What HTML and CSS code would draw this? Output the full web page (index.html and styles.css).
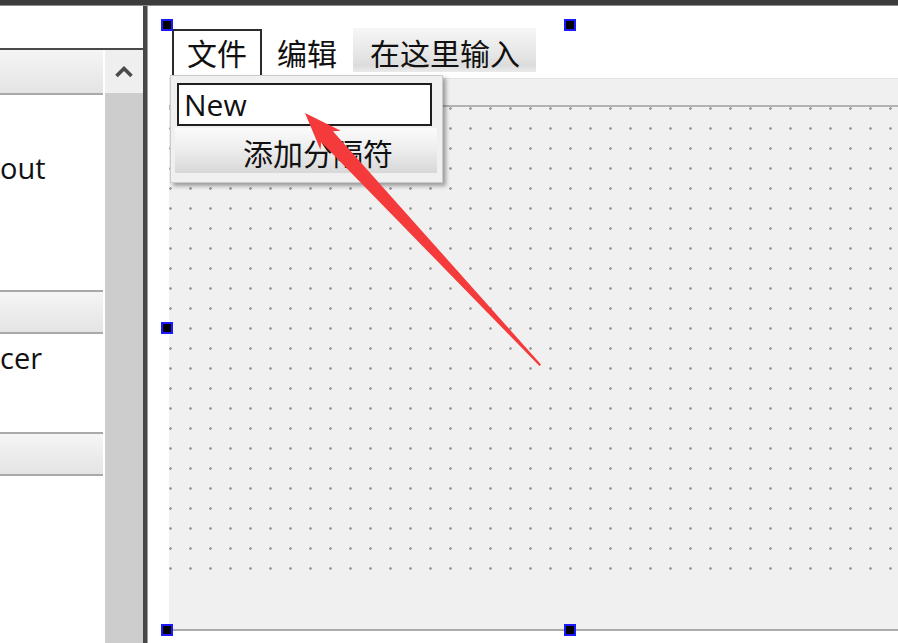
FILE: index.html
```html
<!DOCTYPE html>
<html lang="zh-CN">
<head>
<meta charset="utf-8">
<title>Designer</title>
<link rel="stylesheet" href="styles.css">
</head>
<body>
<div class="topbar"></div>
<div class="main">
  <aside class="left">
    <div class="left-top"></div>
    <div class="left-list">
      <div class="list-col">
        <div class="cat"></div>
        <div class="item-area a1"><span class="item">out</span></div>
        <div class="cat mid"></div>
        <div class="item-area a2"><span class="item">cer</span></div>
        <div class="cat mid"></div>
        <div class="item-area a3"></div>
      </div>
      <div class="scroll">
        <div class="scroll-btn">
          <svg width="20" height="13" viewBox="0 0 20 13"><polyline points="2.5,11 10,3.5 17.5,11" fill="none" stroke="#4a4a4a" stroke-width="3.6"/></svg>
        </div>
        <div class="scroll-track"></div>
      </div>
    </div>
  </aside>
  <div class="sep"></div>
  <section class="canvas">
    <div class="form">
      <div class="menubar">
        <div class="menu active">文件</div>
        <div class="menu plain">编辑</div>
        <div class="menu typehere">在这里输入</div>
      </div>
      <div class="toolbar"></div>
      <div class="central"></div>
      <div class="statusbar"></div>
    </div>
    <span class="handle h-tl"></span>
    <span class="handle h-tm"></span>
    <span class="handle h-ml"></span>
    <span class="handle h-bl"></span>
    <span class="handle h-bm"></span>
    <div class="popup">
      <div class="input">New</div>
      <div class="btn">添加分隔符</div>
    </div>
  </section>
</div>
<svg class="arrow" width="898" height="643" viewBox="0 0 898 643">
  <polygon points="305,113 340.8,130.8 332.9,131.2 541,364.5 539.5,366 321.3,142.2 320.4,149.8" fill="#f43a3a"/>
</svg>
</body>
</html>
```
FILE: styles.css
```css
html, body {
  margin: 0;
}
body {
  width: 898px;
  height: 643px;
  overflow: hidden;
  position: relative;
  background: #fff;
  font-family: "Noto Sans", "Noto Sans CJK SC", sans-serif;
  color: #111;
}
.topbar {
  height: 5px;
  background: #3c3c3c;
  border-bottom: 1px solid #8c8c8c;
}
.main {
  display: flex;
  height: 637px;
}
.left {
  width: 143px;
  flex: none;
  border-right: 4px solid #474747;
  display: flex;
  flex-direction: column;
}
.left-top {
  height: 42px;
  border-bottom: 2px solid #4a4a4a;
  background: #fff;
}
.left-list {
  flex: 1;
  display: flex;
  gap: 2px;
  background: #fff;
}
.list-col {
  width: 103px;
  display: flex;
  flex-direction: column;
  overflow: hidden;
}
.cat {
  flex: none;
  height: 43px;
  background: linear-gradient(#f5f5f5, #e4e4e4);
  border-bottom: 2px solid #a9a9a9;
}
.cat.mid {
  height: 40px;
  border-top: 2px solid #a9a9a9;
}
.item-area {
  flex: none;
  background: #fff;
}
.a1 {
  height: 195px;
  box-sizing: border-box;
  padding-top: 53px;
}
.a2 {
  height: 98px;
  box-sizing: border-box;
  padding-top: 4px;
}
.a3 {
  flex: 1;
}
.item {
  display: block;
  font-family: "Open Sans", "Noto Sans", sans-serif;
  font-weight: 500;
  font-size: 29px;
  line-height: 40px;
  white-space: nowrap;
}
.scroll {
  width: 38px;
  display: flex;
  flex-direction: column;
}
.scroll-btn {
  height: 43px;
  background: #efefef;
  display: flex;
  align-items: center;
  justify-content: center;
}
.scroll-track {
  flex: 1;
  background: #cdcdcd;
}
.sep {
  width: 1px;
  flex: none;
  background: #9c9c9c;
}
.canvas {
  flex: 1;
  position: relative;
  background: #fff;
  overflow: hidden;
}
.form {
  margin: 18px 0 0 21px;
  width: 800px;
  display: flex;
  flex-direction: column;
  border-bottom: 2px solid #acacac;
}
.menubar {
  height: 54px;
  box-sizing: border-box;
  display: flex;
  align-items: flex-start;
  padding: 5px 0 0 3px;
  background: #fff;
  font-size: 30px;
  line-height: 32px;
}
.menu {
  white-space: nowrap;
  box-sizing: border-box;
}
.menu.active {
  width: 90px;
  height: 49px;
  border: 2px solid #2b2b2b;
  border-bottom: 0;
  text-align: center;
  padding-top: 7px;
}
.menu.plain {
  padding: 9px 15px 0;
}
.menu.typehere {
  margin: -1px 0 0 1px;
  width: 183px;
  height: 44px;
  padding: 10px 0 0 17px;
  background: linear-gradient(#f6f6f6, #e6e6e6 60%, #dcdcdc 85%, #eaeaea);
}
.toolbar {
  height: 29px;
  box-sizing: border-box;
  background: #f0f0f0;
  border-top: 1px solid #e2e2e2;
  border-bottom: 2px solid #b2b2b2;
}
.central {
  height: 473px;
  background-color: #f0f0f0;
  background-image: radial-gradient(circle at 1.5px 1.5px, #9e9e9e 1px, rgba(158, 158, 158, 0) 1.6px);
  background-size: 20px 20px;
}
.statusbar {
  height: 49px;
  background: #f0f0f0;
}
.handle {
  position: absolute;
  width: 12px;
  height: 12px;
  box-sizing: border-box;
  background: #000;
  border: 2px solid #1a1aff;
}
.h-tl { left: 13px; top: 13px; }
.h-tm { left: 416px; top: 13px; }
.h-ml { left: 13px; top: 316px; }
.h-bl { left: 13px; top: 618px; }
.h-bm { left: 416px; top: 618px; }
.popup {
  position: absolute;
  left: 22px;
  top: 69px;
  width: 273px;
  height: 108px;
  box-sizing: border-box;
  background: #f0f0f0;
  border: 1px solid #cbcbcb;
  box-shadow: 3px 3px 4px rgba(0, 0, 0, 0.35);
  padding: 7px 0 0 6px;
}
.input {
  width: 255px;
  height: 43px;
  box-sizing: border-box;
  border: 2px solid #1e1e1e;
  background: #fff;
  font-family: "Open Sans", "Noto Sans", sans-serif;
  font-weight: 500;
  font-size: 30px;
  line-height: 40px;
  padding-left: 5px;
}
.btn {
  margin: 2px 0 0 -2px;
  width: 262px;
  height: 45px;
  box-sizing: border-box;
  background: linear-gradient(#fbfbfb, #ececec 50%, #d8d8d8);
  padding-left: 68px;
  font-size: 30px;
  line-height: 52px;
  white-space: nowrap;
}
.arrow {
  position: absolute;
  left: 0;
  top: 0;
  pointer-events: none;
}
```
